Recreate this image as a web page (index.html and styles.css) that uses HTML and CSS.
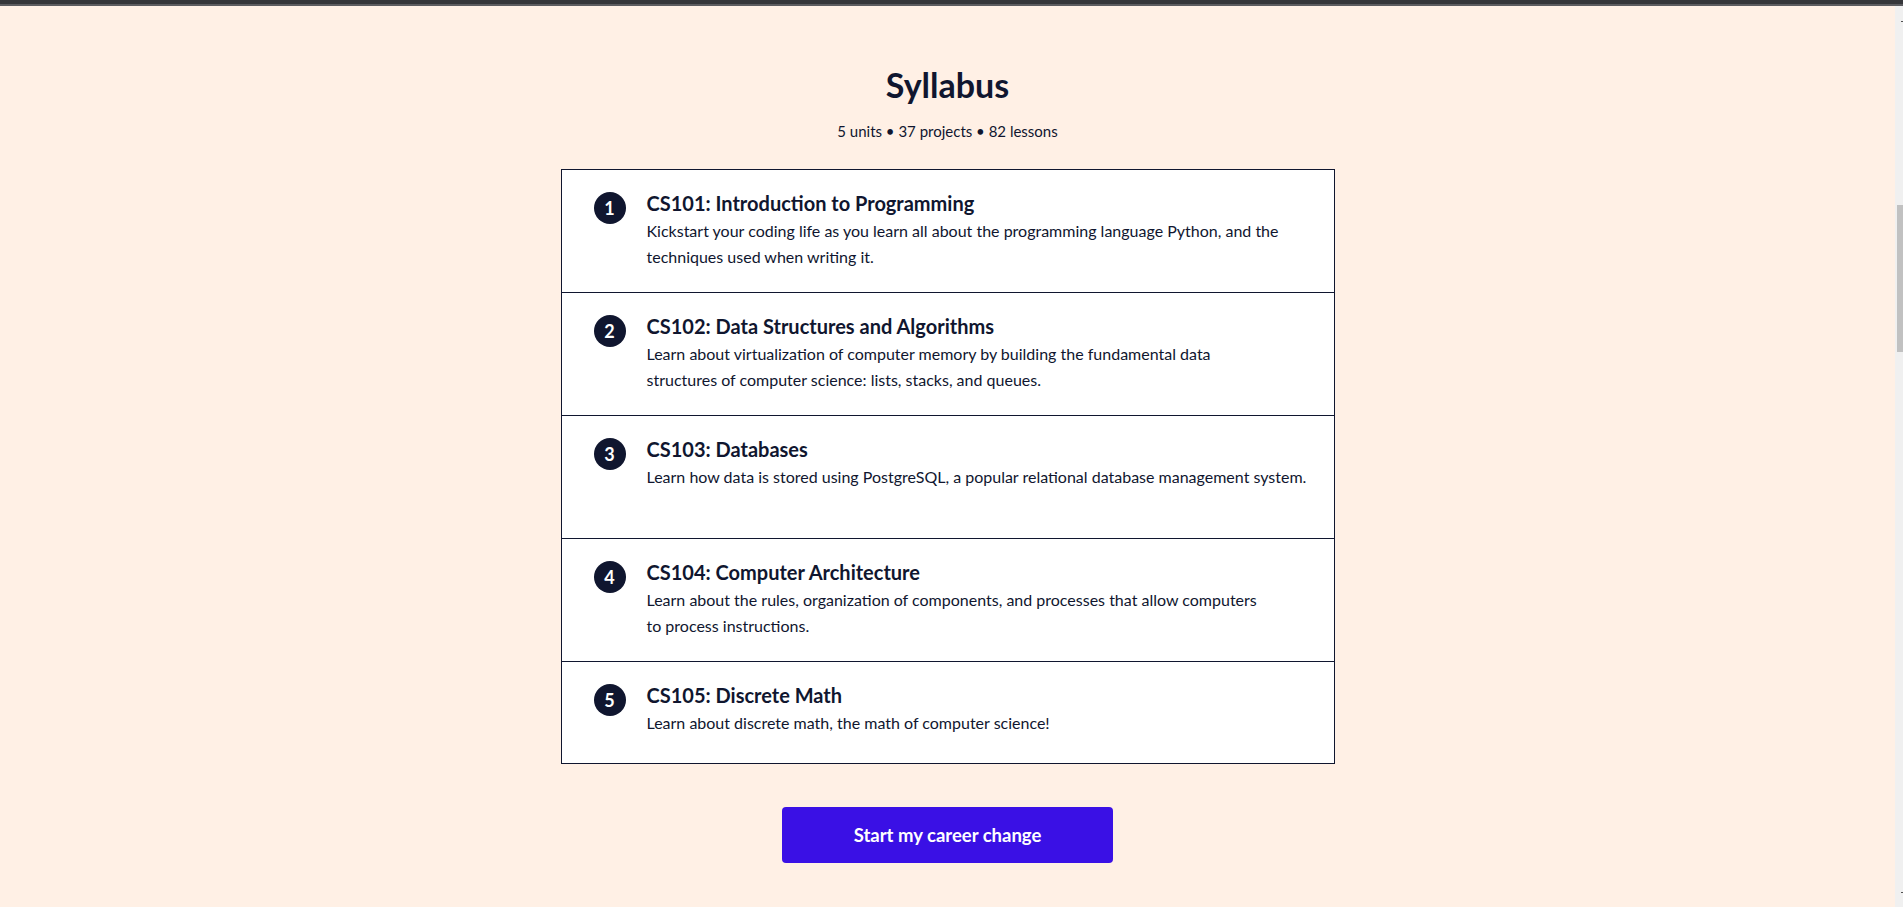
FILE: index.html
```html
<!DOCTYPE html>
<html lang="en">
<head>
<meta charset="utf-8">
<title>Syllabus</title>
<link rel="stylesheet" href="styles.css">
</head>
<body>
<div class="chrome-top"></div>
<div class="viewport">
  <main class="page">
    <section class="syllabus">
      <h2 class="syllabus-title">Syllabus</h2>
      <p class="syllabus-meta">5 units • 37 projects • 82 lessons</p>
      <ol class="units">
        <li class="unit">
          <span class="unit-num">1</span>
          <div class="unit-body">
            <h3 class="unit-title">CS101: Introduction to Programming</h3>
            <p class="unit-desc">Kickstart your coding life as you learn all about the programming language Python, and the techniques used when writing it.</p>
          </div>
        </li>
        <li class="unit">
          <span class="unit-num">2</span>
          <div class="unit-body">
            <h3 class="unit-title">CS102: Data Structures and Algorithms</h3>
            <p class="unit-desc">Learn about virtualization of computer memory by building the fundamental data<br>structures of computer science: lists, stacks, and queues.</p>
          </div>
        </li>
        <li class="unit unit-tall">
          <span class="unit-num">3</span>
          <div class="unit-body">
            <h3 class="unit-title">CS103: Databases</h3>
            <p class="unit-desc">Learn how data is stored using PostgreSQL, a popular relational database management system.</p>
          </div>
        </li>
        <li class="unit">
          <span class="unit-num">4</span>
          <div class="unit-body">
            <h3 class="unit-title">CS104: Computer Architecture</h3>
            <p class="unit-desc">Learn about the rules, organization of components, and processes that allow computers<br>to process instructions.</p>
          </div>
        </li>
        <li class="unit unit-last">
          <span class="unit-num">5</span>
          <div class="unit-body">
            <h3 class="unit-title">CS105: Discrete Math</h3>
            <p class="unit-desc">Learn about discrete math, the math of computer science!</p>
          </div>
        </li>
      </ol>
      <a class="cta" href="#">Start my career change</a>
    </section>
  </main>
  <div class="scrollbar">
    <span class="sb-arrow sb-up"></span>
    <div class="sb-thumb"></div>
    <span class="sb-arrow sb-down"></span>
  </div>
</div>
</body>
</html>
```

FILE: styles.css
```css
* { box-sizing: border-box; }

html, body {
  margin: 0;
  padding: 0;
  height: 907px;
  overflow: hidden;
}

body {
  background: #fff0e5;
  color: #10162f;
  font-family: "Lato", "Liberation Sans", sans-serif;
}

.chrome-top {
  height: 6px;
  background: #35363a;
  border-bottom: 2px solid #5c5c60;
}

.viewport {
  display: flex;
  height: 901px;
}

.page {
  flex: 1;
  background: #fff0e5;
}

.syllabus {
  display: flex;
  flex-direction: column;
  align-items: center;
  padding-top: 59px;
}

.syllabus-title {
  margin: 0;
  font-size: 34px;
  line-height: 40px;
  font-weight: 700;
}

.syllabus-meta {
  margin: 16px 0 0;
  font-size: 15px;
  line-height: 20px;
}

.units {
  list-style: none;
  margin: 28px 0 0;
  padding: 0;
  width: 774px;
  background: #fff;
  border: 1px solid #10162f;
}

.unit {
  display: flex;
  align-items: flex-start;
  gap: 21px;
  min-height: 122px;
  padding: 22px 24px 22px 32px;
  border-top: 1px solid #10162f;
}

.unit:first-child { border-top: 0; }

.unit-tall { min-height: 123px; }

.unit-last {
  min-height: 0;
  padding-bottom: 27px;
}

.unit-num {
  flex: 0 0 32px;
  width: 32px;
  height: 32px;
  border-radius: 50%;
  background: #10162f;
  color: #fff;
  font-weight: 700;
  font-size: 18px;
  line-height: 32px;
  text-align: center;
}

.unit-body { flex: 1; }

.unit-title {
  margin: 0;
  font-size: 20px;
  line-height: 22px;
  font-weight: 700;
}

.unit-desc {
  margin: 4px 0 0;
  font-size: 16px;
  line-height: 26px;
}

.cta {
  margin-top: 43px;
  width: 331px;
  height: 56px;
  display: flex;
  align-items: center;
  justify-content: center;
  background: #3a10e5;
  color: #fff;
  border-radius: 4px;
  font-size: 18.5px;
  font-weight: 700;
  text-decoration: none;
}

.scrollbar {
  flex: 0 0 8px;
  background: #f0f0f0;
  display: flex;
  flex-direction: column;
  align-items: flex-end;
  position: relative;
}

.sb-thumb {
  width: 6px;
  height: 147px;
  margin-top: 199px;
  background: #c1c1c1;
}

.sb-arrow {
  position: absolute;
  right: 0;
  width: 2px;
  height: 1px;
  background: #505050;
}

.sb-up { top: 15px; }
.sb-down { bottom: 14px; }
```
